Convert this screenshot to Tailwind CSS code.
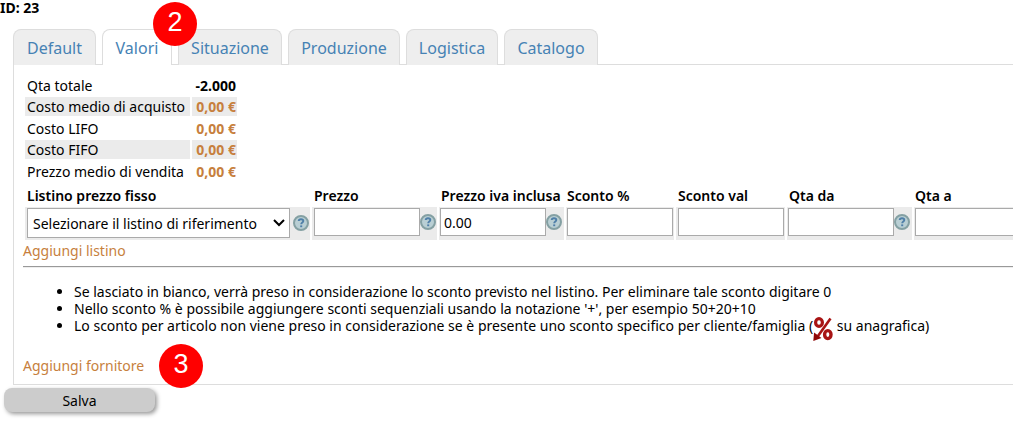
<!DOCTYPE html>
<html lang="it">
<head>
    <meta charset="UTF-8" />
    <meta name="viewport" content="width=device-width, initial-scale=1.0" />
    <title>Articolo 23</title>
    <script src="https://cdn.jsdelivr.net/npm/@tailwindcss/browser@4"></script>
</head>
<body class="pb-3 bg-white text-black font-['Noto_Sans','Open_Sans',sans-serif] text-[14px] leading-[17px]">
<svg class="hidden">
    <symbol id="help" viewBox="0 0 16 16">
        <circle cx="8" cy="8" r="7" fill="#b9cfd4" stroke="#84a0a3" stroke-width="2" />
        <path d="M5.7 6C5.8 4.7 6.7 4.2 8 4.2s2.3.6 2.3 1.8c0 1.5-2.1 1.5-2.1 3.2" fill="none" stroke="#4f7fa8" stroke-width="1.9" />
        <rect x="7.2" y="10.4" width="2" height="1.8" fill="#4f7fa8" />
    </symbol>
</svg>

<h1 class="-mt-px font-bold">ID: 23</h1>

<nav class="flex gap-[6px] pl-[13px] mt-[13px] text-[16px] leading-5">
    <a href="#default" class="h-9 w-[83px] pt-2 text-center text-[#4682b4] bg-[#eee] border border-b-0 border-[#ddd] rounded-t-lg">Default</a>
    <a href="#valori" class="relative z-10 h-9 w-[70px] pt-2 text-center text-[#4682b4] bg-white border border-b-0 border-[#ddd] rounded-t-lg">Valori
        <span class="absolute z-20 left-[50px] -top-7 size-11 rounded-full bg-[#f00] text-white text-center font-['Liberation_Sans',sans-serif] text-[27px] leading-[40px]">2</span>
    </a>
    <a href="#situazione" class="h-9 w-[104px] pt-2 text-center text-[#4682b4] bg-[#eee] border border-b-0 border-[#ddd] rounded-t-lg">Situazione</a>
    <a href="#produzione" class="h-9 w-[112px] pt-2 text-center text-[#4682b4] bg-[#eee] border border-b-0 border-[#ddd] rounded-t-lg">Produzione</a>
    <a href="#logistica" class="h-9 w-[92px] pt-2 text-center text-[#4682b4] bg-[#eee] border border-b-0 border-[#ddd] rounded-t-lg">Logistica</a>
    <a href="#catalogo" class="h-9 w-[94px] pt-2 text-center text-[#4682b4] bg-[#eee] border border-b-0 border-[#ddd] rounded-t-lg">Catalogo</a>
</nav>

<main id="valori" class="ml-[13px] -mt-px pl-[9px] pt-2 pb-[10px] border border-r-0 border-[#ddd]">
    <table class="border-separate border-spacing-[2px]">
        <tr class="h-[20px]">
            <th scope="row" class="w-[165px] pl-[2px] font-normal text-left whitespace-nowrap">Qta totale</th>
            <td class="w-[45px] px-px text-right font-bold whitespace-nowrap">-2.000</td>
        </tr>
        <tr class="h-[19px] bg-[#ebebeb]">
            <th scope="row" class="pl-[2px] font-normal text-left whitespace-nowrap">Costo medio di acquisto</th>
            <td class="px-px text-right font-bold text-[#c77f3d] whitespace-nowrap">0,00 €</td>
        </tr>
        <tr class="h-[20px]">
            <th scope="row" class="pl-[2px] font-normal text-left whitespace-nowrap">Costo LIFO</th>
            <td class="px-px text-right font-bold text-[#c77f3d] whitespace-nowrap">0,00 €</td>
        </tr>
        <tr class="h-[19px] bg-[#ebebeb]">
            <th scope="row" class="pl-[2px] font-normal text-left whitespace-nowrap">Costo FIFO</th>
            <td class="px-px text-right font-bold text-[#c77f3d] whitespace-nowrap">0,00 €</td>
        </tr>
        <tr class="h-[20px]">
            <th scope="row" class="pl-[2px] font-normal text-left whitespace-nowrap">Prezzo medio di vendita</th>
            <td class="px-px text-right font-bold text-[#c77f3d] whitespace-nowrap">0,00 €</td>
        </tr>
    </table>

    <div class="overflow-hidden">
        <table class="table-fixed w-[1001px] border-separate border-spacing-[2px]">
            <thead>
            <tr class="h-[20px] text-left whitespace-nowrap">
                <th class="w-[285px] pl-[2px] font-semibold"><label for="listino">Listino prezzo fisso</label></th>
                <th class="w-[125px] pl-[2px] font-semibold"><label for="prezzo">Prezzo</label></th>
                <th class="w-[125px] pl-[2px] font-semibold"><label for="prezzoIva">Prezzo iva inclusa</label></th>
                <th class="w-[108px] pl-px font-semibold"><label for="scontoPerc">Sconto %</label></th>
                <th class="w-[109px] pl-[2px] font-semibold"><label for="scontoVal">Sconto val</label></th>
                <th class="w-[125px] pl-[2px] font-semibold"><label for="qtaDa">Qta da</label></th>
                <th class="w-[108px] pl-px font-semibold"><label for="qtaA">Qta a</label></th>
            </tr>
            </thead>
            <tbody>
            <tr class="h-[33px] bg-[#ebebeb] align-top">
                <td class="p-px pl-[2px]">
                    <div class="flex items-center gap-[3px]">
                        <div class="relative">
                            <select id="listino" class="block appearance-none w-[263px] h-[30px] pl-[5px] bg-white border border-[#aaa]">
                                <option>Selezionare il listino di riferimento</option>
                            </select>
                            <svg class="absolute right-[5px] top-[11px] w-3 h-2 pointer-events-none" viewBox="0 0 12 8" fill="none" stroke="#000" stroke-width="2"><path d="M1 1l5 5 5-5" /></svg>
                        </div>
                        <svg class="size-4"><use href="#help" /></svg>
                    </div>
                </td>
                <td class="p-px pl-[2px]">
                    <div class="flex items-center">
                        <input id="prezzo" type="text" class="w-[106px] h-7 px-1 bg-white border border-[#aaa]" />
                        <svg class="size-4"><use href="#help" /></svg>
                    </div>
                </td>
                <td class="p-px">
                    <div class="flex items-center">
                        <input id="prezzoIva" type="text" value="0.00" class="w-[106px] h-7 px-[3px] bg-white border border-[#aaa]" />
                        <svg class="size-4"><use href="#help" /></svg>
                    </div>
                </td>
                <td class="p-px"><input id="scontoPerc" type="text" class="block w-[106px] h-7 px-1 bg-white border border-[#aaa]" /></td>
                <td class="p-px pl-[2px]"><input id="scontoVal" type="text" class="block w-[106px] h-7 px-1 bg-white border border-[#aaa]" /></td>
                <td class="p-px">
                    <div class="flex items-center">
                        <input id="qtaDa" type="text" class="w-[106px] h-7 px-1 bg-white border border-[#aaa]" />
                        <svg class="size-4"><use href="#help" /></svg>
                    </div>
                </td>
                <td class="p-px"><input id="qtaA" type="text" class="block w-[106px] h-7 px-1 bg-white border border-[#aaa]" /></td>
            </tr>
            </tbody>
        </table>
    </div>

    <a href="#aggiungi-listino" class="block w-fit text-[#c77f3d]">Aggiungi listino</a>
    <hr class="mt-[7px] border-t-0 h-[2px] bg-[#999] border-b border-[#eee]" />

    <ul class="mt-[15px] pl-[51px] list-disc">
        <li>Se lasciato in bianco, verrà preso in considerazione lo sconto previsto nel listino. Per eliminare tale sconto digitare 0</li>
        <li>Nello sconto % è possibile aggiungere sconti sequenziali usando la notazione '+', per esempio 50+20+10</li>
        <li>Lo sconto per articolo non viene preso in considerazione se è presente uno sconto specifico per cliente/famiglia (<svg class="inline-block align-top w-5 h-6 -mb-2" viewBox="0 0 20 24" fill="none" stroke="#a81414">
            <ellipse cx="6" cy="5.5" rx="3.4" ry="3.9" stroke-width="3.2" />
            <ellipse cx="14.8" cy="17.6" rx="3.2" ry="4" stroke-width="3.4" />
            <path d="M17.5 1.5L5 19" stroke-width="2.6" />
            <path d="M.3 24l.8-8.5 7.4 5.6z" fill="#8f0808" stroke="none" />
        </svg> su anagrafica)</li>
    </ul>

    <div class="relative mt-[23px] w-fit">
        <a href="#aggiungi-fornitore" class="block text-[#c77f3d]">Aggiungi fornitore</a>
        <span class="absolute z-20 left-[136px] -top-[13px] size-11 rounded-full bg-[#f00] text-white text-center font-['Liberation_Sans',sans-serif] text-[27px] leading-[40px]">3</span>
    </div>
</main>

<button type="button" class="block ml-1 mt-[3px] w-[151px] h-6 bg-[#ccc] rounded-lg shadow-[2px_2px_4px_#999]">Salva</button>
</body>
</html>
